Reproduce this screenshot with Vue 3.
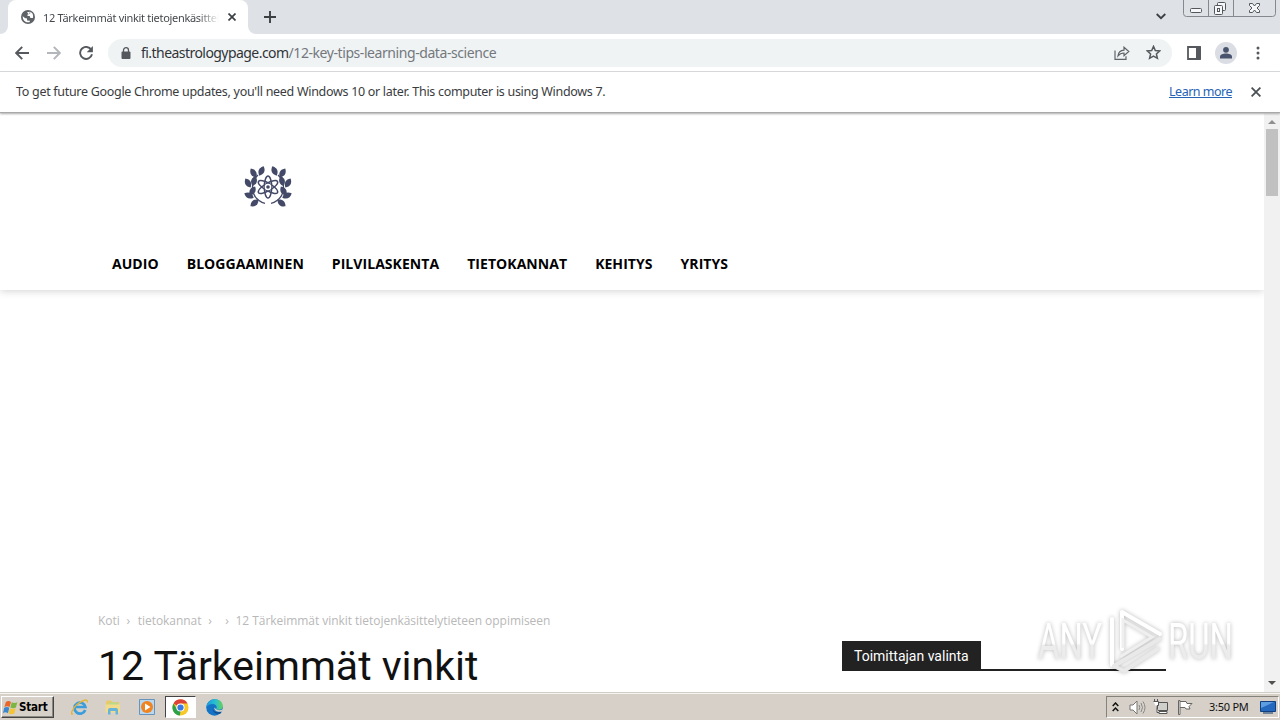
<script setup>
import { ref } from 'vue'

const menu = ref(['Audio', 'Bloggaaminen', 'Pilvilaskenta', 'Tietokannat', 'Kehitys', 'Yritys'])
const leaves = [
  { x: -6.5, y: -16, r: 25 },
  { x: -14.5, y: -14, r: -32 },
  { x: -14, y: -6, r: 15 },
  { x: -20, y: -4, r: -30 },
  { x: -15.5, y: 4, r: 30 },
  { x: -19, y: 8.500, r: -65 },
  { x: -13.500, y: 16, r: 50 }
]
</script>

<template>
  <div class="screen">
    <header class="tabstrip">
      <div class="tab-edge"></div>
      <div class="tab">
        <svg class="globe" width="14" height="14" viewBox="0 0 14 14">
          <circle cx="7" cy="7" r="7" fill="#5f6368" />
          <path d="M1.7 6.2 4.3 8.2 5.8 8.3 6.4 10.8 8.5 10.4 8.9 12C5 13.2 1.6 10.5 1.7 6.2ZM6 2.2 8.8 1.7 8.5 3.4 6.6 4.4 6.5 6 8.7 6.1 9.4 7.9 11.9 8.1C12.8 5.1 11.4 2.6 9.2 1.8L9.2 3.4 7.6 4.2Z" fill="#fff" />
        </svg>
        <span class="tab-title">12 Tärkeimmät vinkit tietojenkäsittely</span>
        <svg class="tab-close" width="8" height="8" viewBox="0 0 8 8"><path d="M.5.5l7 7M7.5.5l-7 7" stroke="#3c4043" stroke-width="1.7" /></svg>
      </div>
      <div class="tab-edge right"></div>
      <svg class="plus" width="12" height="12" viewBox="0 0 12 12"><path d="M6 0v12M0 6h12" stroke="#3c4043" stroke-width="1.9" /></svg>
      <svg class="chevron" width="10" height="7" viewBox="0 0 10 7"><path d="M.7 1 5 5.2 9.3 1" fill="none" stroke="#3c4043" stroke-width="1.8" /></svg>
      <svg class="win-buttons" width="94" height="18" viewBox="0 0 94 18">
        <path d="M.5 0v13.500q0 3 3 3h86q3 0 3-3V0M25.500 0v16M50.500 0v16" fill="none" stroke="#85898f" />
        <g fill="#f6f7f8" stroke="#53575c">
          <rect x="7.500" y="8.500" width="11" height="4" rx="1" />
          <rect x="34.500" y="2.500" width="8" height="8" rx="1" />
          <rect x="31.500" y="5.500" width="8" height="9" rx="1" />
          <rect x="34.500" y="8.500" width="2" height="3" />
          <path d="M66.500 3.500h3l2 2.500 2-2.500h3v2l-2.500 2.500 2.500 2.500v2h-3l-2-2.500-2 2.500h-3v-2l2.500-2.500-2.500-2.500z" />
        </g>
      </svg>
    </header>

    <div class="toolbar">
      <svg class="back" width="14" height="14" viewBox="0 0 14 14"><path d="M14 7H1.500M7.200.8 1.200 7l6 6.200" fill="none" stroke="#55595e" stroke-width="1.900" /></svg>
      <svg class="forward" width="14" height="14" viewBox="0 0 14 14"><path d="M0 7h12.500M6.800.8l6 6.200-6 6.200" fill="none" stroke="#b3b6ba" stroke-width="1.900" /></svg>
      <svg class="reload" width="14" height="14" viewBox="0 0 14 14"><path d="M12.300 3.800A6 6 0 1 0 13 8.300" fill="none" stroke="#55595e" stroke-width="1.900" /><path d="M13.900 0v6.200H7.700z" fill="#55595e" /></svg>
      <div class="omnibox">
        <svg width="10" height="12" viewBox="0 0 10 12"><rect x=".5" y="4.500" width="9" height="7.500" rx="1" fill="#55595e" /><path d="M2.500 5V3.200a2.500 2.500 0 0 1 5 0V5" fill="none" stroke="#55595e" stroke-width="1.300" /></svg>
        <div class="url"><span class="host">fi.theastrologypage.com</span><span class="path">/12-key-tips-learning-data-science</span></div>
        <svg class="share" width="16" height="14" viewBox="0 0 16 14" fill="none" stroke="#5f6368" stroke-width="1.200"><path d="M1 4.500v8.800h11v-3" /><path d="M4 10c.4-3.800 2.500-5.600 6-5.800V1.200l4.800 4.300L10 9.700V7C7.400 7 5.500 8 4 10Z" /></svg>
        <svg class="star" width="15" height="15" viewBox="0 0 15 15"><path d="m7.500 1.400 1.800 4.100 4.500.4-3.400 3 1 4.400-3.900-2.300-3.900 2.300 1-4.400-3.400-3 4.500-.4Z" fill="none" stroke="#55595e" stroke-width="1.500" /></svg>
      </div>
      <svg class="panel" width="14" height="14" viewBox="0 0 14 14"><path d="M1 1h12v12H1z" fill="none" stroke="#55595e" stroke-width="1.800" /><path d="M9 1h5v12H9z" fill="#55595e" /></svg>
      <svg class="avatar" width="22" height="22" viewBox="0 0 22 22"><circle cx="11" cy="11" r="11" fill="#dadde3" /><circle cx="11" cy="7.800" r="2.900" fill="#48546e" /><path d="M5 16.500v-1.700c0-2 3-3.200 6-3.200s6 1.200 6 3.200v1.700z" fill="#48546e" /></svg>
      <svg class="dots" width="4" height="14" viewBox="0 0 4 14" fill="#55595e"><circle cx="2" cy="2" r="1.500" /><circle cx="2" cy="7" r="1.500" /><circle cx="2" cy="12" r="1.500" /></svg>
    </div>

    <div class="infobar">
      <span class="notice">To get future Google Chrome updates, you'll need Windows 10 or later. This computer is using Windows 7.</span>
      <a class="learn">Learn more</a>
      <svg width="10" height="10" viewBox="0 0 10 10"><path d="m.6.600 8.800 8.800M9.400.6.600 9.400" stroke="#4c5054" stroke-width="1.800" /></svg>
    </div>

    <div class="viewport">
      <main class="page">
        <div class="site-header">
          <svg class="logo" width="50" height="44" viewBox="-25 -22 50 44">
            <g v-for="side in [1, -1]" :key="side" :transform="`scale(${side} 1)`">
              <path d="M-10-12C-18-5-17 8-9 13.500q3 2.500 6 2.800" fill="none" stroke="#434967" stroke-width="1.300" />
              <path v-for="(leaf, i) in leaves" :key="i" d="M0-5.200C3.800-2 3.800 2 0 5.200-3.800 2-3.800-2 0-5.200Z" :transform="`translate(${leaf.x} ${leaf.y}) rotate(${leaf.r})`" fill="#434967" />
            </g>
            <g fill="none" stroke="#fff" stroke-width="4">
              <circle r="9.500" fill="#fff" />
            </g>
            <g fill="none" stroke="#434967" stroke-width="1.500">
              <ellipse rx="3.700" ry="11" />
              <ellipse rx="3.700" ry="11" transform="rotate(60)" />
              <ellipse rx="3.700" ry="11" transform="rotate(120)" />
            </g>
            <circle r="3.300" fill="#fff" />
            <circle r="1.800" fill="#434967" />
          </svg>
          <nav class="menu">
            <a v-for="item in menu" :key="item">{{ item }}</a>
          </nav>
        </div>
        <div class="content">
          <article class="article">
            <div class="crumbs"><span class="c1">Koti</span><i>›</i><span class="c2">tietokannat</span><i>›</i><i>›</i><span class="c3">12 Tärkeimmät vinkit tietojenkäsittelytieteen oppimiseen</span></div>
            <h1>12 Tärkeimmät vinkit</h1>
          </article>
          <aside class="sidebar">
            <h4><span>Toimittajan valinta</span></h4>
          </aside>
        </div>
      </main>
      <div class="scrollbar">
        <svg width="8" height="4" viewBox="0 0 8 4"><path d="M0 4 4 0l4 4z" fill="#909090" /></svg>
        <div class="thumb"></div>
        <svg class="down" width="8" height="4" viewBox="0 0 8 4"><path d="m0 0 4 4 4-4z" fill="#505050" /></svg>
      </div>
      <svg class="watermark" width="230" height="76" viewBox="0 0 230 76">
        <defs>
          <linearGradient id="fade" x1="0" y1="0" x2="0" y2="1">
            <stop offset="0" stop-color="#fff" /><stop offset=".52" stop-color="#fff" /><stop offset=".56" stop-color="#ededed" /><stop offset="1" stop-color="#e9e9e9" />
          </linearGradient>
        </defs>
        <g class="mark">
          <text x="8" y="56" textLength="64" lengthAdjust="spacingAndGlyphs" fill="url(#fade)">ANY</text>
          <text x="138" y="56" textLength="65" lengthAdjust="spacingAndGlyphs" fill="url(#fade)">RUN</text>
          <path d="M82 16v46M92 46V9l38 22" fill="none" stroke="#fff" stroke-width="4" stroke-linejoin="round" stroke-linecap="round" />
          <path d="M93 45V17l29 17-32 20" fill="none" stroke="#efefef" stroke-width="3" />
          <path d="m131 35-47 28 10 5 35-23" fill="none" stroke="#e9e9e9" stroke-width="4" stroke-linejoin="round" />
        </g>
      </svg>
    </div>

    <footer class="taskbar">
      <div class="start">
        <svg width="16" height="15" viewBox="0 0 17 16"><path d="M3 2q3-2 5.500 0L7 7.500q-3-1.500-5.500 0z" fill="#e9662b" /><path d="M9.300 2.400q3 1.600 6 0L13.700 8q-3 1.500-5.900 0z" fill="#7bb642" /><path d="M1.200 8.300q3-1.500 5.500 0L5.200 14q-2.800-1.700-5.200 0z" fill="#3a87d0" /><path d="M7.500 8.800q3 1.600 5.900 0L12 14.500q-3 1.400-6 0z" fill="#f5c435" /></svg>
        <b>Start</b>
      </div>
      <svg class="ie" width="18" height="18" viewBox="0 0 18 18"><path d="M14.200 12A5.500 5.500 0 1 1 14.400 9H5" fill="none" stroke="#3b9ddb" stroke-width="2.700" /><path d="M2 15.500C-1 18 .6 11 6 6.500S17 .2 16.300 4.500" fill="none" stroke="#e2b53a" stroke-width="1.400" /></svg>
      <svg class="folder" width="16" height="16" viewBox="0 0 16 16"><path d="M1 3q0-1.500 1.500-1.500H6L7.500 3H14v10H1z" fill="#e9ca66" /><path d="M4 3.500h9V8H4z" fill="#b8d98b" /><path d="M.5 5.500h14.500v8H.5z" fill="#f2dc8c" /><path d="M3 15.500V11q0-2 2-2h6q2 0 2 2v4.500h-2.500V12h-5v3.500z" fill="#66b3dc" /></svg>
      <svg class="player" width="16" height="16" viewBox="0 0 16 16"><path d="M.5.500h15v15H.5z" fill="#b9d7ee" stroke="#6794bd" /><circle cx="8" cy="8" r="6" fill="#ef8420" /><path d="m6 4.500 5.500 3.500L6 11.500z" fill="#fff" /></svg>
      <div class="active-task">
        <svg width="17" height="17" viewBox="0 0 18 18"><circle cx="9" cy="9" r="8.500" fill="#f8c728" /><path d="M9 9 1.600 4.700A8.500 8.500 0 0 1 16.400 4.700H9z" fill="#dc4336" /><path d="M1.600 4.700 5.300 11.200 9 13l-.7 4.500A8.500 8.500 0 0 1 1.600 4.700Z" fill="#2ca14b" /><circle cx="9" cy="9" r="4.300" fill="#fff" /><circle cx="9" cy="9" r="3.300" fill="#3979e6" /></svg>
      </div>
      <svg class="edge" width="17" height="17" viewBox="0 0 17 17"><defs><linearGradient id="sea" x1="0" y1="0" x2="1" y2="0"><stop stop-color="#1b98dd" /><stop offset=".55" stop-color="#29bfd0" /><stop offset="1" stop-color="#68d15c" /></linearGradient></defs><circle cx="8.500" cy="8.500" r="8.300" fill="#1473c5" /><path d="M.2 8.500C1-2.800 17-2 16.800 7.200c0 3.800-5 4.500-6.800 2.800 2-2.500-.5-5-3.200-5S1.500 6 .2 8.500Z" fill="url(#sea)" /><path d="M7.800 7C5 10 8 14.500 14.500 13l1.400-.6-1.500 2C9 16.500 4.500 11 7.800 7Z" fill="#134b8c" /><path d="M10 10c1.500 1.500 4.500 1.700 7 0l-.8 2.500C12 13.500 8 12 8.300 8.500z" fill="#d6d0c8" /></svg>
      <div class="tray">
        <svg class="expand" width="7" height="10" viewBox="0 0 7 10"><path d="m.7 4 2.800-3 2.800 3M.7 9l2.800-3 2.800 3" fill="none" stroke="#111" stroke-width="1.500" /></svg>
        <svg class="volume" width="17" height="15" viewBox="0 0 17 15"><path d="M1 5h3l4-4v13l-4-4H1z" fill="#fff" stroke="#777" /><path d="M10 5q1.500 2.500 0 5M12 3q3 4.500 0 9M14 1.500q4 6 0 12" fill="none" stroke="#888" /></svg>
        <svg class="network" width="17" height="16" viewBox="0 0 17 16"><path d="M4.500 3.500h10v8h-10z" fill="#cfcfcc" stroke="#555" /><path d="M6 12.500h8v2H6z" fill="#fff" stroke="#555" /><path d="M.5 2.500h5v4h-1.500v7h2M1.500 0v3M4.500 0v3" fill="#fff" stroke="#555" /></svg>
        <svg class="flag" width="17" height="16" viewBox="0 0 17 16"><path d="M1.500 15.500V1.500h1.500v14zM3 2.500h6l1 2h5l-3 3 1 2.500h-4l-1-1.500H3" fill="#fff" stroke="#666" /></svg>
        <span class="clock">3:50 PM</span>
        <svg class="desktop" width="16" height="13" viewBox="0 0 16 13"><path d="M.5.500h15v10H.5z" fill="#2469be" stroke="#123f7d" /><path d="M1 1h13L1 7z" fill="#5d9ee2" /><path d="M3 12h10" stroke="#4c6b8b" stroke-width="1.500" /></svg>
      </div>
    </footer>
  </div>
</template>

<style>
body {
  margin: 0;
}
</style>

<style scoped>
.screen {
  width: 1280px;
  height: 720px;
  overflow: hidden;
  display: flex;
  flex-direction: column;
  background: #fff;
  font-family: "Noto Sans", sans-serif;
}

svg {
  display: block;
  flex: none;
}

span {
  white-space: nowrap;
}

.tabstrip {
  height: 34px;
  flex: none;
  display: flex;
  background: #dee1e6;
}

.tab-edge {
  width: 8px;
  background: #fff;
}

.tab-edge::before {
  content: "";
  display: block;
  height: 34px;
  background: #dee1e6;
  border-bottom-right-radius: 8px;
}

.tab-edge.right::before {
  border-radius: 0 0 0 8px;
}

.tab {
  width: 240px;
  box-sizing: border-box;
  padding: 0 12px 0 13px;
  display: flex;
  align-items: center;
  background: #fff;
  border-radius: 8px 8px 0 0;
}

.tab-title {
  width: 176px;
  margin-left: 8px;
  margin-right: 9px;
  font-size: 11px;
  letter-spacing: -0.3px;
  color: #45494d;
  -webkit-mask-image: linear-gradient(90deg, #000 155px, transparent 176px);
  mask-image: linear-gradient(90deg, #000 155px, transparent 176px);
}

.plus {
  margin: 11px 0 0 8px;
}

.chevron {
  margin: 13px 17px 0 auto;
}

.win-buttons {
  margin-right: 3px;
}

.toolbar {
  height: 37px;
  flex: none;
  display: flex;
  align-items: center;
  border-bottom: 1px solid #d9dbde;
}

.back {
  margin-left: 15px;
}

.forward {
  margin-left: 18px;
}

.reload {
  margin-left: 18px;
}

.omnibox {
  width: 1064px;
  height: 28px;
  margin-left: 15px;
  box-sizing: border-box;
  padding: 0 10px 0 13px;
  display: flex;
  align-items: center;
  border-radius: 14px;
  background: #f0f3f4;
}

.url {
  display: flex;
  margin-left: 10px;
  font-size: 14px;
}

.host {
  color: #303338;
  letter-spacing: -0.55px;
}

.path {
  color: #74787d;
  letter-spacing: -0.43px;
}

.share {
  margin-left: auto;
  margin-right: 16px;
}

.star {
  margin-right: 1px;
}

.panel {
  margin-left: 15px;
}

.avatar {
  margin-left: 14px;
}

.dots {
  margin-left: 19px;
}

.infobar {
  height: 40px;
  flex: none;
  padding: 0 19px 0 16px;
  display: flex;
  align-items: center;
  border-bottom: 1px solid #a9a9a9;
  box-shadow: 0 1px 2px #aaa;
  position: relative;
  z-index: 1;
  font-size: 12.5px;
  letter-spacing: -0.3px;
  color: #3a3c40;
}

.notice,
.learn {
  padding-bottom: 2px;
}

.learn {
  margin-left: auto;
  margin-right: 19px;
  letter-spacing: -0.5px;
  color: #2563b5;
  text-decoration: underline;
}

.viewport {
  position: relative;
  flex: 1;
  min-height: 0;
  display: flex;
}

.page {
  flex: 1;
  overflow: hidden;
}

.site-header {
  height: 177px;
  box-sizing: border-box;
  padding: 52px 98px 0;
  box-shadow: 0 1px 8px rgba(0, 0, 0, 0.18);
}

.logo {
  margin-left: 145px;
}

.menu {
  display: flex;
  margin-top: 31px;
}

.menu a {
  padding: 0 14px;
  font: bold 14px/48px "Open Sans", sans-serif;
  letter-spacing: 0.055px;
  text-transform: uppercase;
  color: #000;
}

.content {
  display: flex;
  justify-content: space-between;
  padding: 321px 98px 0;
}

.crumbs {
  display: flex;
  align-items: center;
  height: 18px;
  font: 12px "Open Sans", sans-serif;
  letter-spacing: -0.04px;
  color: #b8b8b8;
}

.crumbs i {
  width: 17px;
  text-align: center;
  font-style: normal;
}

.c2 {
  margin-left: 1px;
}

h1 {
  margin: 12px 0 0;
  font: 400 41px/50px Roboto, sans-serif;
  color: #111;
  white-space: nowrap;
}

.sidebar {
  width: 324px;
  padding-top: 30px;
}

h4 {
  margin: 0;
  display: flex;
  border-bottom: 2px solid #222;
  font: 400 14px/28px Roboto, sans-serif;
}

h4 span {
  height: 27px;
  padding: 1px 12px 0;
  background: #222;
  color: #fff;
}

.scrollbar {
  width: 16px;
  display: flex;
  flex-direction: column;
  align-items: center;
  background: #f1f1f1;
  padding: 7px 0;
  box-sizing: border-box;
}

.thumb {
  width: 12px;
  height: 67px;
  margin-top: 5px;
  background: #c1c1c1;
}

.down {
  margin-top: auto;
}

.watermark {
  position: absolute;
  left: 1030px;
  top: 490px;
}

.watermark text {
  font: 400 50px Roboto, sans-serif;
}

.mark {
  filter: drop-shadow(0 0 2px rgba(0, 0, 0, 0.28));
}

.taskbar {
  height: 28px;
  flex: none;
  box-sizing: border-box;
  display: flex;
  align-items: center;
  background: #d6d0c8;
  border-top: 1px solid #d1cdc4;
  box-shadow: inset 0 1px #f7f5f2;
}

.start {
  width: 53px;
  height: 22px;
  box-sizing: border-box;
  margin: 1px 0 0 1px;
  padding-left: 1px;
  display: flex;
  align-items: center;
  border: 1px solid;
  border-color: #fff #444 #444 #fff;
  box-shadow: inset -1px -1px #8c8983;
  font: 11.5px "DejaVu Sans Condensed", "DejaVu Sans", sans-serif;
}

.start b {
  letter-spacing: -0.2px;
}

.ie {
  margin: 1px 0 0 17px;
}

.folder {
  margin: 1px 0 0 16px;
}

.player {
  margin: 1px 0 0 18px;
}

.active-task {
  width: 31px;
  height: 22px;
  box-sizing: border-box;
  margin: 1px 0 0 10px;
  display: flex;
  align-items: center;
  justify-content: center;
  background: #fff;
  border: 1px solid;
  border-color: #444 #fff #fff #444;
}

.edge {
  margin: 1px 0 0 10px;
}

.tray {
  width: 173px;
  height: 22px;
  box-sizing: border-box;
  margin: 1px 1px 0 auto;
  display: flex;
  align-items: center;
  border: 1px solid;
  border-color: #858279 #fff #fff #858279;
  padding-left: 5px;
}

.volume {
  margin-left: 10px;
}

.network {
  margin-left: 7px;
}

.flag {
  margin-left: 7px;
}

.clock {
  margin-left: 15px;
  padding-bottom: 1px;
  font-size: 11px;
  letter-spacing: -0.25px;
  color: #111;
}

.desktop {
  margin-left: auto;
  margin-right: 2px;
}
</style>
